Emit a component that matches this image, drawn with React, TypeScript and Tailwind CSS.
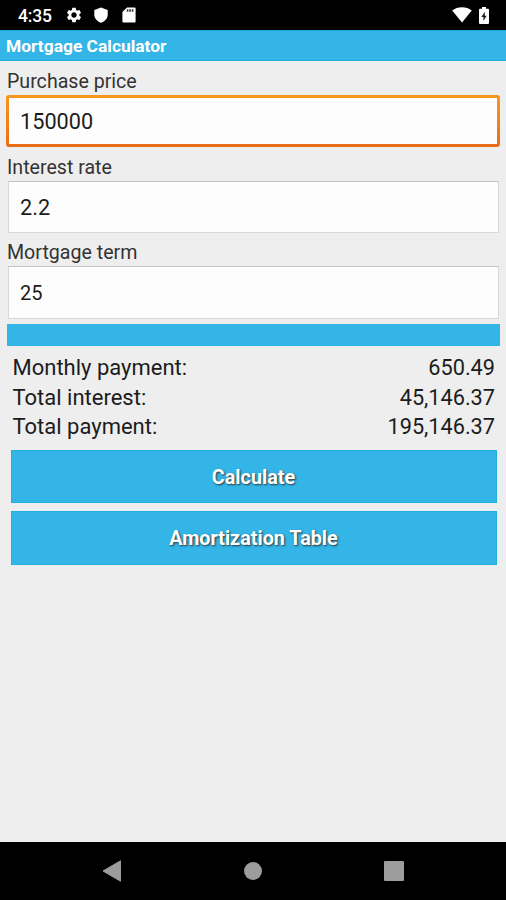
import { MdSettings } from 'react-icons/md';

const fields = [
  { id: 'price', label: 'Purchase price', value: '150000', active: true, text: 'text-[21.7px]' },
  { id: 'rate', label: 'Interest rate', value: '2.2', active: false, text: 'text-[21.7px]' },
  { id: 'term', label: 'Mortgage term', value: '25', active: false, text: 'text-[20px]' },
];

const results = [
  { label: 'Monthly payment:', value: '650.49' },
  { label: 'Total interest:', value: '45,146.37' },
  { label: 'Total payment:', value: '195,146.37' },
];

function StatusBar() {
  return (
    <div className="flex h-[30px] shrink-0 items-center bg-black pl-[18px] pr-[17px] text-white">
      <span className="w-[47px] pt-[3px] text-[17.5px] font-medium leading-none tracking-[-0.2px]">4:35</span>
      <MdSettings className="size-[18px]" />
      <svg viewBox="0 0 14 16" className="ml-[11px] h-[16px] w-[14px]" fill="currentColor">
        <path d="M7 .5 13.7 3V7.5C13.7 11.3 11 14.6 7 15.7 3 14.6 .3 11.3 .3 7.5V3Z" />
      </svg>
      <svg viewBox="0 0 14 16" className="ml-[14px] h-[16px] w-[14px]" fill="currentColor">
        <path d="M5 .5H12.6Q13.6 .5 13.6 1.5V14.5Q13.6 15.5 12.6 15.5H1.4Q.4 15.5 .4 14.5V5Z" />
        <path d="M5.6 2.3V4.8M8.1 2.3V4.8M10.6 2.3V4.8" stroke="#333" strokeWidth="1.6" />
      </svg>
      <svg viewBox="0 0 20 16" className="ml-auto h-[16px] w-[20px]" fill="currentColor">
        <path d="M10 15.6.2 3.5C2.8 1.4 6.2.2 10 .2S17.2 1.4 19.8 3.5Z" />
      </svg>
      <svg viewBox="0 0 10 17" className="ml-[7px] h-[17px] w-[10px]" fill="currentColor">
        <path d="M3 0H7V1.7H9Q10 1.7 10 2.7V16Q10 17 9 17H1Q0 17 0 16V2.7Q0 1.7 1 1.7H3Z" />
        <path d="M5.8 4.7 2.3 10H4.4V14L7.7 8.7H5.8Z" fill="#222" />
      </svg>
    </div>
  );
}

function Field({ id, label, value, active, text }: (typeof fields)[number]) {
  return (
    <div className="h-[85.5px]">
      <label htmlFor={id} className="block h-[29px] px-[7px] pt-[3px] text-[19.6px] leading-[26px] text-[#333]">
        {label}
      </label>
      {active ? (
        <div className="mx-[6px] h-[52px] rounded-[3px] bg-linear-to-b from-[#f6981f] to-[#e96d17] p-[3px]">
          <input
            id={id}
            defaultValue={value}
            className={`block h-full w-full bg-[#fdfdfd] px-[11px] text-[#1c1c1c] outline-none ${text}`}
          />
        </div>
      ) : (
        <input
          id={id}
          defaultValue={value}
          className={`mx-[8px] block h-[52.5px] w-[490.5px] border border-[#d8d8d8] border-t-[#c4c4c4] bg-[#fdfdfd] px-[11px] pt-[2px] text-[#1c1c1c] outline-none ${text}`}
        />
      )}
    </div>
  );
}

function ActionButton({ children }: { children: string }) {
  return (
    <button className="h-[53.5px] w-full border border-[#1fb0dc] bg-[#33b5e7] pt-[3px] text-[19.8px] font-bold text-white [text-shadow:1px_1px_2px_#333]">
      {children}
    </button>
  );
}

function NavBar() {
  return (
    <div className="flex h-[58px] shrink-0 items-center justify-between bg-black pl-[101.5px] pr-[102.5px] text-[#9c9c9c]">
      <svg viewBox="0 0 20 22" className="h-[22px] w-[20px]" fill="currentColor">
        <path d="M1 11 18.5.8V21.2Z" stroke="currentColor" strokeLinejoin="round" />
      </svg>
      <div className="size-[18px] rounded-full bg-[#9c9c9c]" />
      <div className="size-[19.5px] rounded-[1px] bg-[#9c9c9c]" />
    </div>
  );
}

export default function App() {
  return (
    <div className="flex h-[900px] w-[506px] flex-col bg-[#eeeeee] font-['Roboto',sans-serif]">
      <StatusBar />
      <header className="flex h-[31px] shrink-0 items-center border-y border-[#1fa9d6] bg-[#33b5e7] px-[6px]">
        <h1 className="pt-px text-[17.4px] font-bold text-white">Mortgage Calculator</h1>
      </header>

      <main className="flex-1 pt-[5px]">
        {fields.map((field) => (
          <Field key={field.id} {...field} />
        ))}

        <div className="ml-[7px] mr-[6px] mt-[1.5px] h-[21.5px] bg-[#33b5e7]" />

        <dl className="pl-[12.5px] pr-[11px] pt-[7.5px] text-[#1c1c1c]">
          {results.map((row) => (
            <div key={row.label} className="flex h-[29.5px] items-baseline justify-between leading-[29.5px]">
              <dt className="text-[22px]">{row.label}</dt>
              <dd className="text-[21.7px]">{row.value}</dd>
            </div>
          ))}
        </dl>

        <div className="flex flex-col gap-2 pl-[10.5px] pr-[9.5px] pt-[8px]">
          <ActionButton>Calculate</ActionButton>
          <ActionButton>Amortization Table</ActionButton>
        </div>
      </main>

      <NavBar />
    </div>
  );
}
